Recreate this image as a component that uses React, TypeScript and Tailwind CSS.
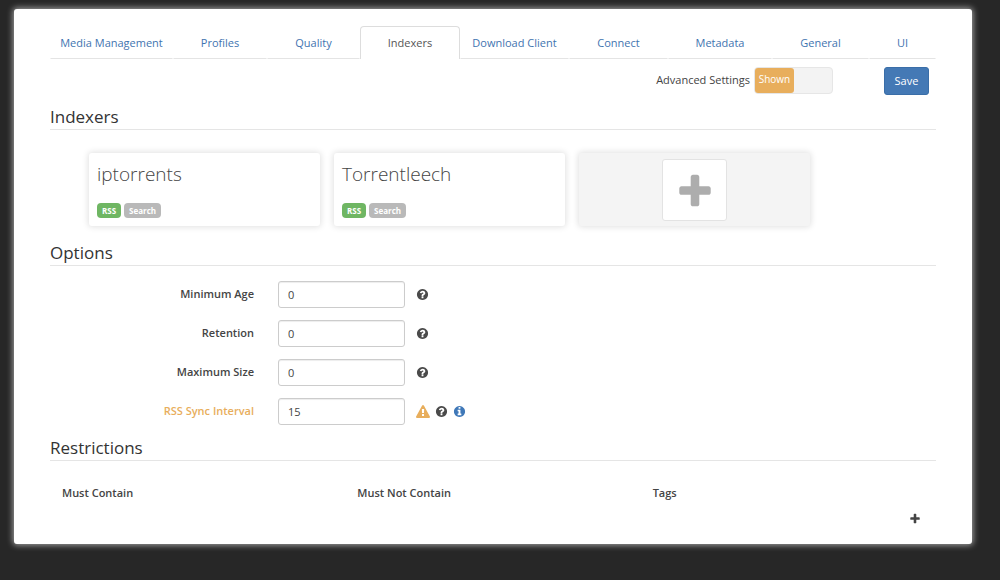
import React from 'react';

interface IconProps {
  path: string;
  className?: string;
}

const plusPath =
  'M1600 736v192q0 40-28 68t-68 28h-416v416q0 40-28 68t-68 28h-192q-40 0-68-28t-28-68v-416h-416q-40 0-68-28t-28-68v-192q0-40 28-68t68-28h416v-416q0-40 28-68t68-28h192q40 0 68 28t28 68v416h416q40 0 68 28t28 68z';
const questionPath =
  'M1024 1376v-192q0-14-9-23t-23-9h-192q-14 0-23 9t-9 23v192q0 14 9 23t23 9h192q14 0 23-9t9-23zm256-672q0-88-55.5-163t-138.5-116-170-41q-243 0-371 213-15 24 8 42l132 100q7 6 19 6 16 0 25-12 53-68 86-92 34-24 86-24 48 0 85.5 26t37.5 59q0 38-20 61t-68 45q-63 28-115.5 86.5t-52.5 125.5v36q0 14 9 23t23 9h192q14 0 23-9t9-23q0-19 21.5-49.5t54.5-49.5q32-18 49-28.5t46-35 44.5-48 28-60.5 12.5-81zm384 192q0 209-103 385.5t-279.5 279.5-385.5 103-385.5-103-279.5-279.5-103-385.5 103-385.5 279.5-279.5 385.5-103 385.5 103 279.5 279.5 103 385.5z';
const infoPath =
  'M1152 1376v-160q0-14-9-23t-23-9h-96v-512q0-14-9-23t-23-9h-320q-14 0-23 9t-9 23v160q0 14 9 23t23 9h96v320h-96q-14 0-23 9t-9 23v160q0 14 9 23t23 9h448q14 0 23-9t9-23zm-128-896v-160q0-14-9-23t-23-9h-192q-14 0-23 9t-9 23v160q0 14 9 23t23 9h192q14 0 23-9t9-23zm640 416q0 209-103 385.5t-279.5 279.5-385.5 103-385.5-103-279.5-279.5-103-385.5 103-385.5 279.5-279.5 385.5-103 385.5 103 279.5 279.5 103 385.5z';
const warningPath =
  'M1024 1375v-190q0-14-9.5-23.5t-22.5-9.5h-192q-13 0-22.5 9.5t-9.5 23.5v190q0 14 9.5 23.5t22.5 9.5h192q13 0 22.5-9.5t9.5-23.5zm-2-374l18-459q0-12-10-19-13-11-24-11h-220q-11 0-24 11-10 7-10 21l17 457q0 10 10 16.5t24 6.5h185q14 0 23.5-6.5t10.5-16.5zm-14-934l768 1408q35 63-2 126-17 29-46.5 46t-63.5 17h-1536q-34 0-63.5-17t-46.5-46q-37-63-2-126l768-1408q17-31 47-49t65-18 65 18 47 49z';

const Icon: React.FC<IconProps> = ({ path, className }) => (
  <svg viewBox="0 0 1792 1792" fill="currentColor" className={className} aria-hidden="true">
    <path d={path} />
  </svg>
);

const tabs = ['Media Management', 'Profiles', 'Quality', 'Indexers', 'Download Client', 'Connect', 'Metadata', 'General', 'UI'];

const Tabs: React.FC = () => (
  <nav className="grid grid-cols-[123fr_94fr_93fr_100fr_109fr_99fr_104fr_97fr_67fr]">
    {tabs.map((tab) => (
      <a
        key={tab}
        href="#"
        className={
          tab === 'Indexers'
            ? 'h-[33px] rounded-t border border-b-0 border-[#ddd] text-center leading-8 text-[#555]'
            : 'h-[33px] rounded-t border border-transparent border-b-[#e4e4e4] text-center leading-8 whitespace-nowrap text-[#3f74b0]'
        }
      >
        {tab}
      </a>
    ))}
  </nav>
);

const Toolbar: React.FC = () => (
  <div className="mt-2 flex h-7 items-start justify-end pr-[7px]">
    <label className="flex items-center gap-1">
      <span>Advanced Settings</span>
      <input type="checkbox" defaultChecked className="sr-only" />
      <span className="flex h-[27px] w-[79px] rounded border border-[#e6e6e6] bg-[#f3f3f3]">
        <span className="h-[25px] w-[39px] rounded-[3px] bg-[#e8ae5c] text-center text-[10px] leading-[22px] font-medium text-white">Shown</span>
      </span>
    </label>
    <button className="ml-[51px] h-7 w-[45px] rounded-[3px] border border-[#3a6ea8] bg-[#4479b5] font-medium text-white">Save</button>
  </div>
);

const Legend: React.FC<{ children: React.ReactNode }> = ({ children }) => (
  <h2 className="h-6 border-b border-[#e5e5e5] text-[17px] leading-[22px] text-[#333]">{children}</h2>
);

const indexers = ['iptorrents', 'Torrentleech'];

const IndexerCards: React.FC = () => (
  <div className="mt-[23px] mb-4 ml-[39px] flex flex-wrap gap-[14px]">
    {indexers.map((name) => (
      <div key={name} className="h-[73px] w-[231px] rounded-[3px] bg-white px-2 shadow-[0_0_6px_1px_rgba(0,0,0,0.12)]">
        <h3 className="pt-1 text-[19px] leading-[34px] font-light text-[#444]">{name}</h3>
        <div className="mt-3 flex gap-[3px] text-[8px] leading-[15px] font-bold text-white">
          <span className="rounded-sm bg-[#6fb663] px-[5px]">RSS</span>
          <span className="rounded-sm bg-[#b9b9b9] px-[5px]">Search</span>
        </div>
      </div>
    ))}
    <div className="flex h-[73px] w-[231px] items-center justify-center rounded-[3px] bg-[#f4f4f4] shadow-[0_0_6px_1px_rgba(0,0,0,0.12)]">
      <button aria-label="Add indexer" className="flex h-[62px] w-[65px] items-center justify-center rounded-[3px] border border-[#e3e3e3] bg-white pt-1">
        <Icon path={plusPath} className="size-10 text-[#adadad]" />
      </button>
    </div>
  </div>
);

const options = [
  { id: 'minimum-age', label: 'Minimum Age', value: '0', advanced: false },
  { id: 'retention', label: 'Retention', value: '0', advanced: false },
  { id: 'maximum-size', label: 'Maximum Size', value: '0', advanced: false },
  { id: 'rss-sync', label: 'RSS Sync Interval', value: '15', advanced: true },
];

const Options: React.FC = () => (
  <div className="mt-[15px] mb-3 flex flex-col gap-3">
    {options.map((option) => (
      <div key={option.id} className="flex h-[27px] items-center">
        <label
          htmlFor={option.id}
          className={option.advanced ? 'w-[204px] text-right font-semibold text-[#e8ae5c]' : 'w-[204px] text-right font-semibold'}
        >
          {option.label}
        </label>
        <input
          id={option.id}
          type="text"
          defaultValue={option.value}
          className="ml-6 h-[27px] w-[127px] rounded-[3px] border border-[#ccc] px-[9px] text-[11px] text-[#444] shadow-[inset_0_1px_1px_rgba(0,0,0,0.075)]"
        />
        <div className="ml-[11px] flex items-center gap-[5px]">
          {option.advanced && <Icon path={warningPath} className="size-[14px] text-[#e8ae5c]" />}
          <Icon path={questionPath} className="size-[13px] text-[#4a4a4a]" />
          {option.advanced && <Icon path={infoPath} className="size-[13px] text-[#3f78b8]" />}
        </div>
      </div>
    ))}
  </div>
);

const Restrictions: React.FC = () => (
  <>
    <table className="mt-6 w-full table-fixed text-left">
      <thead>
        <tr>
          <th className="pl-3 leading-4 font-semibold">Must Contain</th>
          <th className="pl-3 leading-4 font-semibold">Must Not Contain</th>
          <th className="pl-3 leading-4 font-semibold">Tags</th>
        </tr>
      </thead>
    </table>
    <div className="mt-3 flex justify-end pr-[15px]">
      <button aria-label="Add restriction">
        <Icon path={plusPath} className="size-3" />
      </button>
    </div>
  </>
);

export default function App() {
  return (
    <div className="min-h-screen bg-[#272727] pt-[9px] pr-7 pb-9 pl-[14px] font-['Open_Sans',sans-serif] text-[11px] text-[#444]">
      <main className="rounded-[3px] bg-white px-9 pt-[17px] pb-[19px] shadow-[0_0_6px_1px_rgba(255,255,255,0.6)]">
        <Tabs />
        <Toolbar />
        <section className="mt-[11px]">
          <Legend>Indexers</Legend>
          <IndexerCards />
        </section>
        <section>
          <Legend>Options</Legend>
          <Options />
        </section>
        <section>
          <Legend>Restrictions</Legend>
          <Restrictions />
        </section>
      </main>
    </div>
  );
}
